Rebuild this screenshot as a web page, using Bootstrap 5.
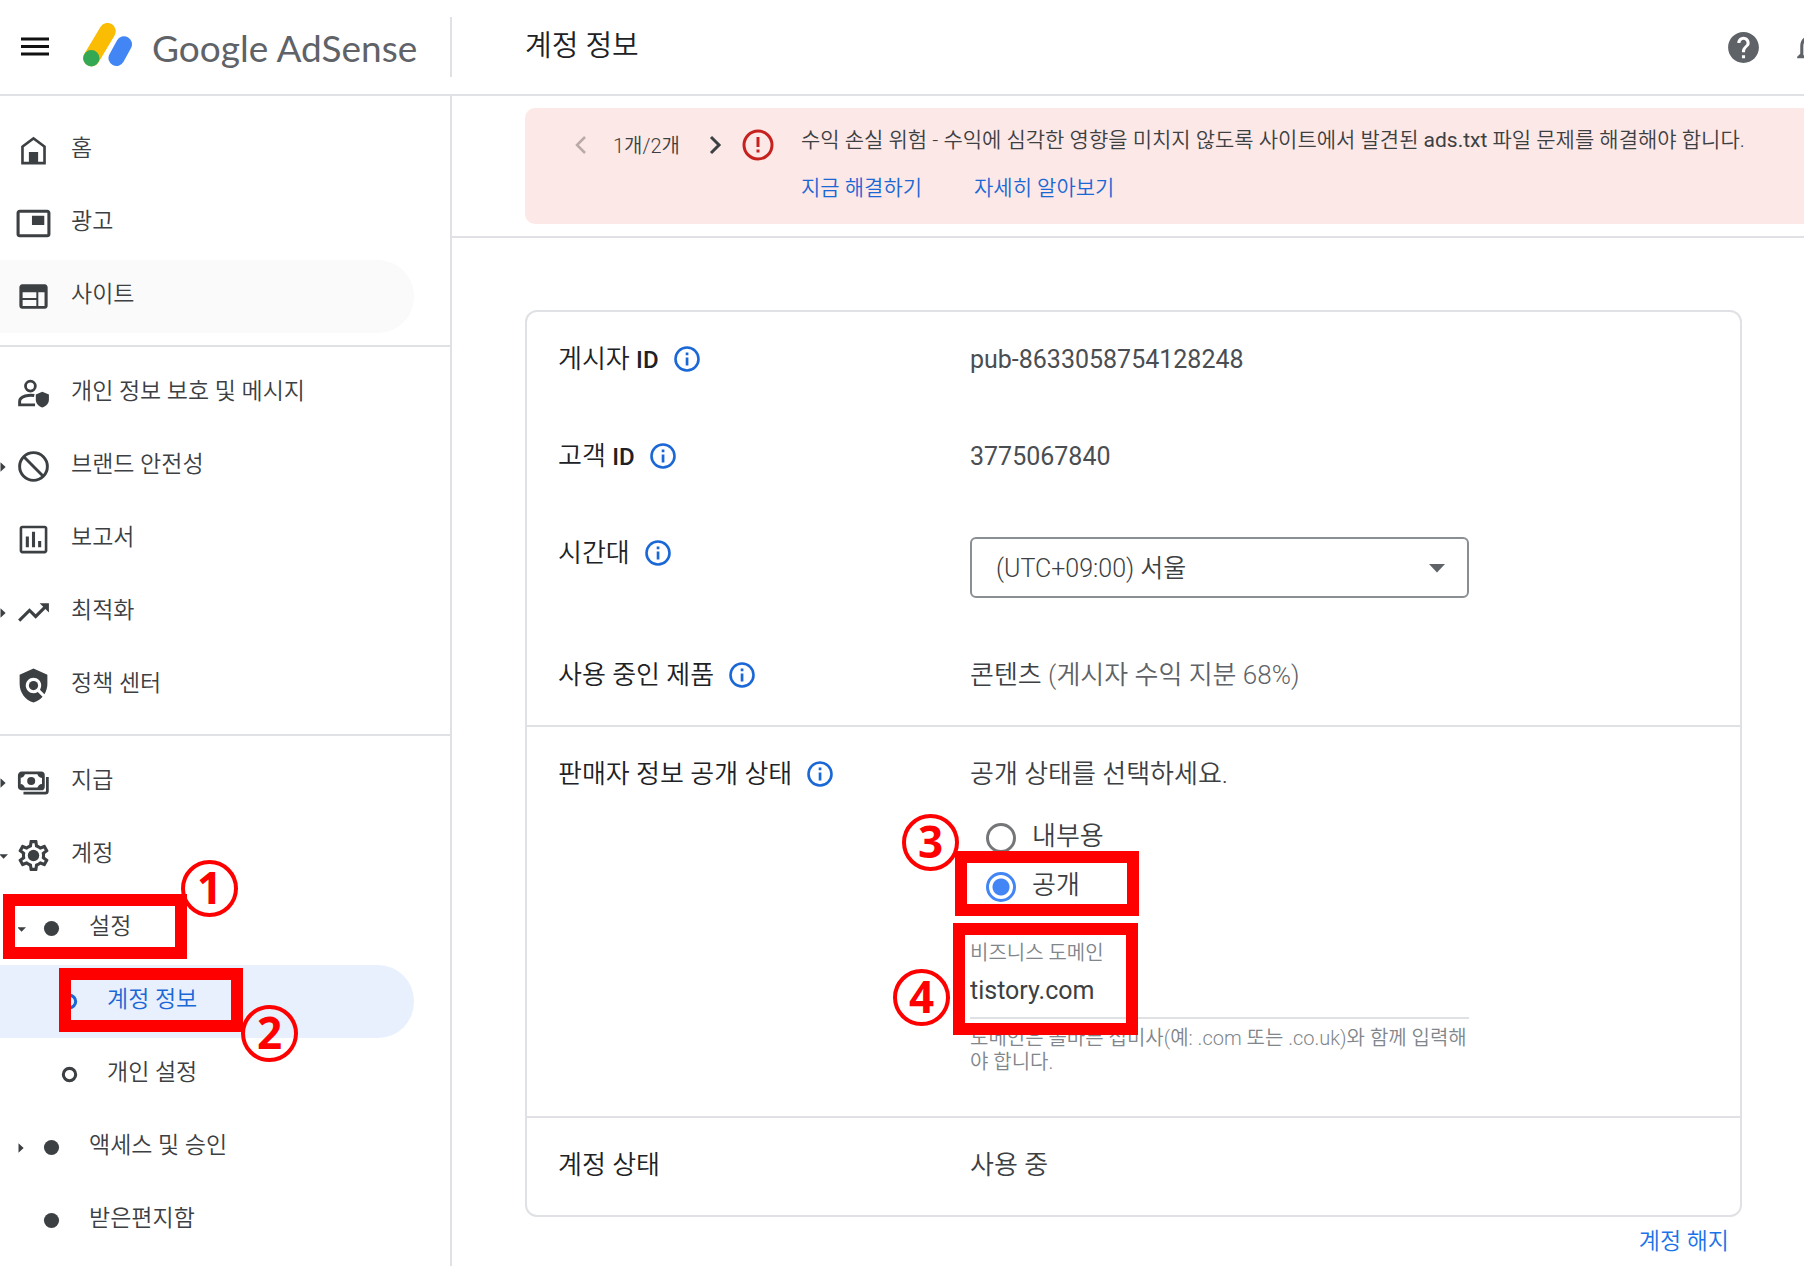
<!DOCTYPE html>
<html lang="ko">
<head>
<meta charset="utf-8">
<meta name="viewport" content="width=device-width, initial-scale=1">
<title>계정 정보 - Google AdSense</title>
<link href="https://cdn.jsdelivr.net/npm/bootstrap@5.3.0/dist/css/bootstrap.min.css" rel="stylesheet">
<style>
:root { --line: #dfe1e5; --ink: #3c4043; --strong: #202124; --link: #1a67d6; --note: #f00; }
body { font-family: Roboto, "Noto Sans CJK KR", sans-serif; font-weight: 350; color: var(--ink); background: #fff; overflow-x: hidden; }
a { text-decoration: none; }
svg { display: block; flex: none; }

/* top bar */
.topbar { height: 96px; border-bottom: 2px solid var(--line); overflow: hidden; }
.brand-side { width: 452px; height: 60px; border-right: 2px solid var(--line); padding-left: 16px; }
.brand-text { font-family: Lato, sans-serif; font-size: 37px; line-height: 48px; color: #5f6368; font-weight: 400; margin-left: 16px; padding-top: 2px; }
.page-title { font-size: 29px; line-height: 40px; font-weight: 350; color: var(--strong); margin: 0 0 2px 73px; }
.top-tools { gap: 29px; margin-right: -24px; color: #5f6368; }
.plain-btn { border: 0; background: none; padding: 0; color: inherit; }

/* side navigation */
.side { width: 452px; flex: none; border-right: 2px solid var(--line); padding-top: 18px; min-height: calc(100vh - 96px); }
.side-link { height: 73px; width: 414px; border-radius: 0 36px 36px 0; color: var(--ink); font-size: 23px; line-height: 32px; position: relative; }
.side-link.hovered { background: #fafafa; }
.side-link.current { background: #e8f0fe; color: var(--link); }
.lvl-2 { padding-left: 18px; }
.lvl-3 { padding-left: 36px; }
.caret-slot { width: 15px; flex: none; }
.side-text { margin-left: 19px; padding-bottom: 3px; }
.side-rule { margin: 12px 0 10px; border: 0; border-top: 2px solid var(--line); opacity: 1; }

/* alert strip */
.main-col { min-width: 0; }
.notice-wrap { padding: 12px 0 12px 73px; border-bottom: 2px solid var(--line); }
.notice { background: #fce8e6; border-radius: 10px 0 0 10px; height: 116px; padding: 16px 0 0 38px; font-size: 21px; line-height: 32px; white-space: nowrap; }
.pager { height: 42px; }
.pager-text { font-size: 20px; width: 69px; margin: 2px 15px 0 14px; }
.notice-body { margin-left: 26px; }
.notice-links { gap: 52px; margin-top: 16px; }
.notice a { color: var(--link); }

/* account panel */
.content { padding: 72px 62px 0 73px; }
.panel { border: 2px solid var(--line); border-radius: 12px; font-size: 26px; line-height: 36px; }
.panel-part { padding: 29px 31px 32px; }
.panel-part + .panel-part { border-top: 2px solid var(--line); }
.entry + .entry { margin-top: 61px; }
.entry-name { width: 412px; flex: none; gap: 15px; height: 36px; color: var(--strong); }
.entry-name b { font-weight: 500; font-size: 24px; }
.latin { font-size: 25px; font-weight: 400; padding-top: 1px; margin-bottom: -1px; color: #4a4e52; }
.zone { width: 499px; height: 61px; margin: 2px 0 -2px; border: 2px solid #8a8f94; border-radius: 6px; padding: 2px 24px 0; font-size: 25px; color: var(--ink); font-weight: 350; appearance: none; background: #fff; }
.zone-wrap { position: relative; width: 499px; }
.zone-wrap svg { position: absolute; right: 24px; top: 29px; pointer-events: none; }
.muted { color: #5f6368; }
.choices { margin-top: 21px; padding-left: 16px; }
.choice { height: 49px; gap: 16px; position: relative; }
.choice label { padding-bottom: 4px; }
.choice .form-check-input { width: 30px; height: 30px; margin: 0; border: 3px solid #747678; background-color: #fff; box-shadow: none; flex: none; }
.choice .form-check-input:checked { border-color: #4285f4; background-image: radial-gradient(circle, #4285f4 8px, transparent 9px); }
.domain { width: 499px; margin: 30px 0 10px; font-size: 20px; line-height: 24px; color: #80868b; position: relative; }
.domain label { display: block; }
.domain input { width: 100%; height: 54px; border: 0; border-bottom: 2px solid var(--line); border-radius: 0; padding: 0 0 2px; font-size: 25px; color: var(--ink); background: none; font-weight: 400; }
.domain-help { margin: 7px 0 0; }
.close-link { color: #1a73e8; font-size: 23px; line-height: 32px; margin: 9px 13px 0 0; }

/* red step marks drawn over the interface */
.mark-box { position: absolute; border: 12px solid var(--note); z-index: 2; pointer-events: none; }
.mark-num { position: absolute; width: 57px; height: 57px; border: 4px solid var(--note); border-radius: 50%; color: var(--note); font: 700 44px/46px "Noto Sans", sans-serif; text-align: center; z-index: 3; pointer-events: none; }
.box-1 { left: 3px; top: 2px; width: 184px; height: 65px; }
.num-1 { left: 181px; top: -32px; }
.box-2 { left: 59px; top: 3px; width: 184px; height: 64px; }
.num-2 { left: 241px; top: 40px; }
.box-3 { left: -31px; top: -11px; width: 184px; height: 65px; }
.num-3 { left: -68px; top: -127px; }
.box-4 { left: -17px; top: -18px; width: 185px; height: 112px; }
.num-4 { left: -77px; top: 28px; }
</style>
</head>
<body>
<svg width="0" height="0" class="position-absolute" aria-hidden="true">
  <symbol id="info" viewBox="0 0 26 26"><circle cx="13" cy="13" r="11.5" fill="none" stroke="#1a67d6" stroke-width="2.6"/><path d="M11.7 6.6h2.7v2.6h-2.7zM11.7 11.4h2.7v8h-2.7z" fill="#1a67d6"/></symbol>
  <symbol id="tri-right" viewBox="0 0 16 12"><path d="M0.500 1l5.500 5-5.500 5z" fill="#3c4043"/></symbol>
  <symbol id="tri-down" viewBox="0 0 16 12"><path d="M-1 4h9.500l-4.700 5z" fill="#3c4043"/></symbol>
  <symbol id="dot" viewBox="0 0 24 24"><circle cx="12" cy="12" r="4.900" fill="currentColor"/></symbol>
  <symbol id="ring" viewBox="0 0 24 24"><circle cx="12" cy="12" r="4" fill="none" stroke="currentColor" stroke-width="2"/></symbol>
</svg>

<header class="topbar d-flex align-items-center">
  <div class="brand-side d-flex align-items-center flex-shrink-0">
    <button class="plain-btn" type="button" aria-label="메뉴"><svg width="38" height="38" viewBox="0 0 38 38" fill="#111"><path d="M5 9.500h28v3H5zM5 17h28v3H5zM5 24.500h28v3H5z"/></svg></button>
    <svg class="ms-4 mb-1" width="58" height="44" viewBox="-5 0 58 44"><path d="M24.500 8.200L8.500 35" stroke="#fbbc04" stroke-width="16.500" stroke-linecap="round"/><path d="M41 21.200L33.500 35" stroke="#4285f4" stroke-width="16" stroke-linecap="round"/><circle cx="8.300" cy="35.200" r="8.200" fill="#34a853"/></svg>
    <div class="brand-text text-nowrap">Google AdSense</div>
  </div>
  <h1 class="page-title text-nowrap">계정 정보</h1>
  <div class="top-tools d-flex align-items-center ms-auto">
    <button class="plain-btn" type="button" aria-label="도움말"><svg width="37" height="37" viewBox="0 0 24 24" fill="currentColor"><path d="M12 2C6.480 2 2 6.480 2 12s4.480 10 10 10 10-4.480 10-10S17.520 2 12 2zm1 17h-2v-2h2v2zm2.070-7.750l-.9.920C13.450 12.900 13 13.500 13 15h-2v-.5c0-1.100.45-2.100 1.170-2.830l1.240-1.260c.37-.36.59-.86.59-1.410 0-1.100-.9-2-2-2s-2 .9-2 2H8c0-2.210 1.790-4 4-4s4 1.790 4 4c0 .88-.36 1.680-.93 2.250z"/></svg></button>
    <button class="plain-btn" type="button" aria-label="알림"><svg width="37" height="37" viewBox="0 0 24 24" fill="currentColor"><path d="M12 22c1.100 0 2-.9 2-2h-4c0 1.100.9 2 2 2zm6-6v-5c0-3.070-1.630-5.640-4.500-6.320V4c0-.83-.67-1.500-1.500-1.500s-1.500.67-1.500 1.500v.68C7.640 5.360 6 7.920 6 11v5l-2 2v1h16v-1l-2-2zm-2 1H8v-6c0-2.480 1.510-4.500 4-4.500s4 2.020 4 4.500v6z"/></svg></button>
  </div>
</header>

<div class="d-flex">
  <nav class="side" aria-label="기본 메뉴">
    <a href="#" class="side-link d-flex align-items-center"><span class="caret-slot"></span><svg width="37" height="37" viewBox="0 0 24 24" fill="#3c4043"><path d="M12 3L4 9v12h16V9l-8-6zm6.300 16.300h-3.300V13H9v6.300H5.700V9.850L12 5.130l6.300 4.720z"/><path d="M9.300 13h5.400v7H9.300z"/></svg><span class="side-text">홈</span></a>
    <a href="#" class="side-link d-flex align-items-center"><span class="caret-slot"></span><svg width="37" height="37" viewBox="0 0 24 24" fill="#3c4043"><path d="M19 7h-8v6h8V7zm2-4H3c-1.100 0-2 .9-2 2v14c0 1.100.9 1.980 2 1.980h18c1.100 0 2-.88 2-1.980V5c0-1.100-.9-2-2-2zm0 16.010H3V4.980h18v14.030z"/></svg><span class="side-text">광고</span></a>
    <a href="#" class="side-link hovered d-flex align-items-center"><span class="caret-slot"></span><svg width="37" height="37" viewBox="0 0 24 24" fill="#3c4043"><path d="M20 4H4c-1.100 0-1.990.9-1.990 2L2 18c0 1.100.9 2 2 2h16c1.100 0 2-.9 2-2V6c0-1.100-.9-2-2-2zm-6 14.200H4.300V14.300H14v3.900zm0-5.200H4.300V9.200H14V13zm5.800 5.200h-4.400V9.200h4.400v9z" transform="translate(1 0) scale(.917 1)"/></svg><span class="side-text">사이트</span></a>
    <hr class="side-rule">
    <a href="#" class="side-link d-flex align-items-center"><span class="caret-slot"></span><svg width="37" height="37" viewBox="0 0 24 24"><circle cx="10" cy="7.200" r="3.200" fill="none" stroke="#3c4043" stroke-width="1.800"/><path d="M12.500 13.300c-3-.6-9.500.2-9.500 3.900v2.200h10" fill="none" stroke="#3c4043" stroke-width="1.900"/><path d="M17.700 10.800l4.300 1.900v3.300c0 2.400-1.800 4.300-4.300 5-2.500-.7-4.200-2.600-4.200-5v-3.300z" fill="#3c4043"/></svg><span class="side-text">개인 정보 보호 및 메시지</span></a>
    <a href="#" class="side-link d-flex align-items-center"><svg class="caret-slot" height="12"><use href="#tri-right"/></svg><svg width="37" height="37" viewBox="0 0 24 24" fill="none" stroke="#3c4043" stroke-width="1.900"><circle cx="12" cy="12" r="9"/><path d="M5.700 5.700l12.600 12.600"/></svg><span class="side-text">브랜드 안전성</span></a>
    <a href="#" class="side-link d-flex align-items-center"><span class="caret-slot"></span><svg width="37" height="37" viewBox="0 0 24 24" fill="#3c4043"><path d="M9 17H7v-7h2v7zm4 0h-2V7h2v10zm4 0h-2v-4h2v4zm2.300 2.300H4.700V4.700h14.600v14.600zM19.300 3H4.700C3.800 3 3 3.800 3 4.700v14.600c0 .9.800 1.700 1.700 1.700h14.600c.9 0 1.700-.8 1.700-1.700V4.700c0-.9-.8-1.700-1.700-1.700z"/></svg><span class="side-text">보고서</span></a>
    <a href="#" class="side-link d-flex align-items-center"><svg class="caret-slot" height="12"><use href="#tri-right"/></svg><svg width="37" height="37" viewBox="0 0 24 24" fill="#3c4043"><path d="M16 6l2.290 2.290-4.880 4.880-4-4L2 16.590 3.410 18l6-6 4 4 6.300-6.290L22 12V6z"/></svg><span class="side-text">최적화</span></a>
    <a href="#" class="side-link d-flex align-items-center"><span class="caret-slot"></span><svg width="37" height="37" viewBox="0 0 24 24" fill="#3c4043"><path d="M21 5l-9-4-9 4v6c0 5.550 3.840 10.740 9 12 2.300-.56 4.330-1.900 5.880-3.710l-3.120-3.120c-1.940 1.290-4.580 1.070-6.290-.64-1.950-1.950-1.950-5.120 0-7.070 1.950-1.950 5.120-1.950 7.070 0 1.710 1.710 1.920 4.350.64 6.290l2.900 2.900C20.290 15.690 21 13.380 21 11V5z"/><circle cx="12" cy="12" r="3"/></svg><span class="side-text">정책 센터</span></a>
    <hr class="side-rule">
    <a href="#" class="side-link d-flex align-items-center"><svg class="caret-slot" height="12"><use href="#tri-right"/></svg><svg width="37" height="37" viewBox="0 0 24 24"><rect x="2.800" y="5.800" width="15.600" height="10.400" rx="1.500" fill="none" stroke="#3c4043" stroke-width="1.800"/><path d="M3 6h3.500a3 3 0 0 1-3 3zM18 6h-3.500a3 3 0 0 0 3 3zM3 16h3.500a3 3 0 0 0-3-3zM18 16h-3.500a3 3 0 0 1 3-3z" fill="#3c4043"/><circle cx="10.500" cy="11" r="2.600" fill="#3c4043"/><path d="M21 8.500v9c0 .8-.6 1.400-1.400 1.400H5.500" fill="none" stroke="#3c4043" stroke-width="1.800"/></svg><span class="side-text">지급</span></a>
    <a href="#" class="side-link d-flex align-items-center"><svg class="caret-slot" height="12"><use href="#tri-down"/></svg><svg width="37" height="37" viewBox="0 0 24 24" fill="#3c4043"><path d="M19.430 12.980c.04-.32.07-.64.07-.98 0-.34-.03-.66-.07-.98l2.110-1.650c.19-.15.24-.42.12-.64l-2-3.460c-.09-.16-.26-.25-.44-.25-.06 0-.12.010-.17.030l-2.490 1c-.52-.4-1.080-.73-1.690-.98l-.38-2.650C14.460 2.180 14.250 2 14 2h-4c-.25 0-.46.180-.49.420l-.38 2.650c-.61.250-1.170.590-1.690.98l-2.490-1c-.06-.02-.12-.03-.18-.03-.17 0-.34.090-.43.250l-2 3.460c-.13.220-.07.490.12.640l2.110 1.650c-.04.320-.07.650-.07.980 0 .33.030.66.070.98l-2.110 1.650c-.19.150-.24.420-.12.640l2 3.460c.09.160.26.250.44.250.06 0 .12-.01.170-.03l2.490-1c.52.400 1.080.730 1.690.98l.38 2.650c.03.240.240.420.490.420h4c.25 0 .46-.18.490-.42l.38-2.650c.61-.25 1.170-.59 1.690-.98l2.490 1c.06.020.12.030.18.030.17 0 .34-.09.430-.25l2-3.460c.12-.22.070-.49-.12-.64l-2.110-1.650zm-1.980-1.710c.04.310.05.520.05.730 0 .21-.02.430-.05.730l-.14 1.130.89.700 1.080.840-.7 1.210-1.270-.51-1.040-.42-.9.680c-.43.320-.84.560-1.250.730l-1.060.430-.16 1.130-.2 1.350h-1.400l-.19-1.350-.16-1.130-1.060-.43c-.43-.18-.83-.41-1.230-.71l-.91-.7-1.060.430-1.270.510-.7-1.210 1.080-.84.890-.7-.14-1.130c-.03-.31-.05-.54-.05-.74s.02-.43.050-.73l.14-1.130-.89-.7-1.080-.84.700-1.210 1.270.510 1.040.420.900-.68c.43-.32.84-.56 1.250-.73l1.060-.43.160-1.130.2-1.350h1.390l.19 1.350.16 1.130 1.060.430c.43.180.83.410 1.230.710l.91.700 1.060-.43 1.270-.51.700 1.210-1.070.850-.89.700.14 1.130z"/><circle cx="12" cy="12" r="3.700"/></svg><span class="side-text">계정</span></a>
    <a href="#" class="side-link lvl-2 d-flex align-items-center"><svg class="caret-slot" height="12" overflow="visible"><use href="#tri-down"/></svg><svg width="37" height="37"><use href="#dot"/></svg><span class="side-text">설정</span>
      <span class="mark-box box-1"></span><span class="mark-num num-1">1</span></a>
    <a href="#" class="side-link lvl-3 current d-flex align-items-center" aria-current="page"><span class="caret-slot"></span><svg width="37" height="37"><use href="#ring"/></svg><span class="side-text">계정 정보</span>
      <span class="mark-box box-2"></span><span class="mark-num num-2">2</span></a>
    <a href="#" class="side-link lvl-3 d-flex align-items-center"><span class="caret-slot"></span><svg width="37" height="37"><use href="#ring"/></svg><span class="side-text">개인 설정</span></a>
    <a href="#" class="side-link lvl-2 d-flex align-items-center"><svg class="caret-slot" height="12"><use href="#tri-right"/></svg><svg width="37" height="37"><use href="#dot"/></svg><span class="side-text">액세스 및 승인</span></a>
    <a href="#" class="side-link lvl-2 d-flex align-items-center"><span class="caret-slot"></span><svg width="37" height="37"><use href="#dot"/></svg><span class="side-text">받은편지함</span></a>
  </nav>

  <main class="main-col flex-grow-1">
    <div class="notice-wrap">
      <div class="notice d-flex" role="alert">
        <div class="pager d-flex align-items-center">
          <button class="plain-btn" type="button" aria-label="이전" disabled><svg width="36" height="36" viewBox="0 0 36 36"><path d="M22 10l-8 8 8 8" fill="none" stroke="#b9a9a9" stroke-width="2.500"/></svg></button>
          <span class="pager-text">1개/2개</span>
          <button class="plain-btn" type="button" aria-label="다음"><svg width="36" height="36" viewBox="0 0 36 36"><path d="M14 10l8 8-8 8" fill="none" stroke="#3c4043" stroke-width="3"/></svg></button>
          <svg class="ms-2" width="34" height="34" viewBox="0 0 34 34"><circle cx="17" cy="17" r="14" fill="none" stroke="#c5221f" stroke-width="3"/><path d="M15.500 9h3v10h-3zM15.500 21.500h3v3h-3z" fill="#c5221f"/></svg>
        </div>
        <div class="notice-body">
          <div>수익 손실 위험 - 수익에 심각한 영향을 미치지 않도록 사이트에서 발견된 <span class="fw-normal">ads.txt</span> 파일 문제를 해결해야 합니다.</div>
          <div class="notice-links d-flex"><a href="#">지금 해결하기</a><a href="#">자세히 알아보기</a></div>
        </div>
      </div>
    </div>

    <div class="content">
      <div class="panel">
        <section class="panel-part">
          <div class="entry d-flex">
            <div class="entry-name d-flex align-items-center"><span>게시자 <b>ID</b></span><svg width="26" height="26"><use href="#info"/></svg></div>
            <div class="latin">pub-8633058754128248</div>
          </div>
          <div class="entry d-flex">
            <div class="entry-name d-flex align-items-center"><span>고객 <b>ID</b></span><svg width="26" height="26"><use href="#info"/></svg></div>
            <div class="latin">3775067840</div>
          </div>
          <div class="entry d-flex">
            <div class="entry-name d-flex align-items-center"><label for="zone">시간대</label><svg width="26" height="26"><use href="#info"/></svg></div>
            <div class="zone-wrap"><select class="zone d-block" id="zone"><option>(UTC+09:00) 서울</option></select><svg width="16" height="9" viewBox="0 0 16 9"><path d="M0 0h16L8 8.500z" fill="#5f6368"/></svg></div>
          </div>
          <div class="entry d-flex">
            <div class="entry-name d-flex align-items-center"><span>사용 중인 제품</span><svg width="26" height="26"><use href="#info"/></svg></div>
            <div>콘텐츠 <span class="muted">(게시자 수익 지분 68%)</span></div>
          </div>
        </section>

        <section class="panel-part d-flex">
          <div class="entry-name d-flex align-items-center"><span>판매자 정보 공개 상태</span><svg width="26" height="26"><use href="#info"/></svg></div>
          <div>
            <div>공개 상태를 선택하세요.</div>
            <div class="choices">
              <div class="choice d-flex align-items-center"><input class="form-check-input" type="radio" name="vis" id="vis-in"><label for="vis-in">내부용</label></div>
              <div class="choice d-flex align-items-center"><input class="form-check-input" type="radio" name="vis" id="vis-out" checked><label for="vis-out">공개</label>
                <span class="mark-box box-3"></span></div>
            </div>
            <div class="domain">
              <label for="domain">비즈니스 도메인</label>
              <input type="text" id="domain" value="tistory.com">
              <p class="domain-help">도메인은 올바른 접미사(예: .com 또는 .co.uk)와 함께 입력해야 합니다.</p>
              <span class="mark-box box-4"></span><span class="mark-num num-4">4</span>
              <span class="mark-num num-3">3</span>
            </div>
          </div>
        </section>

        <section class="panel-part d-flex">
          <div class="entry-name d-flex align-items-center">계정 상태</div>
          <div>사용 중</div>
        </section>
      </div>
      <div class="d-flex justify-content-end"><a href="#" class="close-link">계정 해지</a></div>
    </div>
  </main>
</div>
<script src="https://cdn.jsdelivr.net/npm/bootstrap@5.3.0/dist/js/bootstrap.bundle.min.js"></script>
</body>
</html>
